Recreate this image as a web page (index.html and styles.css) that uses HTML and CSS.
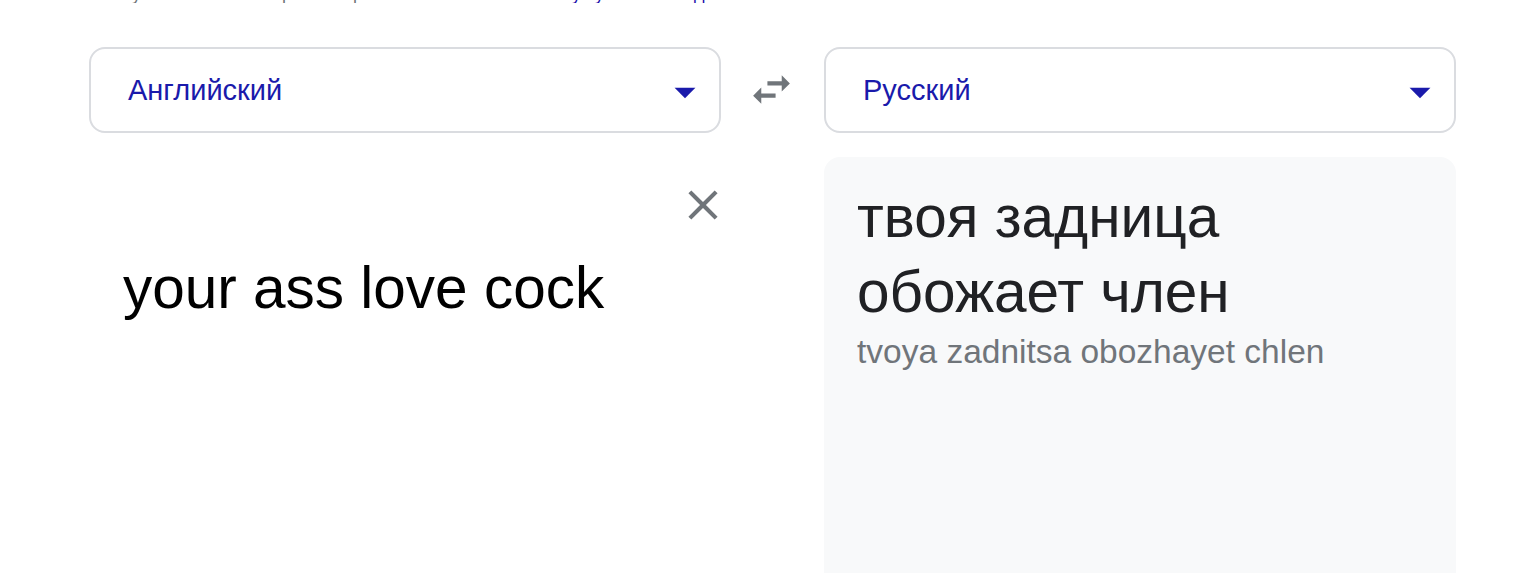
FILE: index.html
```html
<!DOCTYPE html>
<html lang="ru">
<head>
<meta charset="utf-8">
<title>Переводчик</title>
<link rel="stylesheet" href="styles.css">
</head>
<body>
<div class="topline"><span class="gray">у</span><span class="gray g2">р</span><span class="gray g3">р</span><span class="link l1">у</span><span class="link l2">у</span><span class="link l3">д</span></div>
<div class="widget">
  <div class="select">
    <span class="lang">Английский</span>
    <svg class="drop" viewBox="0 0 24 24"><path d="M7 10l5 5 5-5z"/></svg>
  </div>
  <div class="swap">
    <svg viewBox="0 0 24 24"><path d="M6.99 11L3 15l3.99 4v-3H14v-2H6.99v-3zM21 9l-3.99-4v3H10v2h7.01v3L21 9z"/></svg>
  </div>
  <div class="select">
    <span class="lang">Русский</span>
    <svg class="drop" viewBox="0 0 24 24"><path d="M7 10l5 5 5-5z"/></svg>
  </div>
  <div class="source">
    <div class="source-text">your ass love cock</div>
    <div class="clear">
      <svg viewBox="0 0 24 24"><path d="M19 6.41L17.59 5 12 10.59 6.41 5 5 6.41 10.59 12 5 17.59 6.41 19 12 13.41 17.59 19 19 17.59 13.41 12z"/></svg>
    </div>
  </div>
  <div></div>
  <div class="target">
    <div class="target-text">твоя задница обожает член</div>
    <div class="translit">tvoya zadnitsa obozhayet chlen</div>
  </div>
</div>
</body>
</html>
```
FILE: styles.css
```css
html, body {
  margin: 0;
  padding: 0;
  background: #fff;
  font-family: "Liberation Sans", Arial, sans-serif;
  overflow: hidden;
  height: 573px;
}
.topline {
  height: 3px;
  overflow: hidden;
  padding-left: 132px;
  font-size: 18px;
  line-height: 18px;
  white-space: nowrap;
  display: flex;
}
.topline span {
  display: block;
  margin-top: -15px;
}
.gray { color: #70757a; }
.link { color: #1a0dab; }
.g2 { margin-left: 141px; }
.g3 { margin-left: 61px; }
.l1 { margin-left: 209px; }
.l2 { margin-left: 14px; }
.l3 { margin-left: 90px; }
.widget {
  display: grid;
  grid-template-columns: 632px 103px 632px;
  grid-template-rows: 86px auto;
  row-gap: 24px;
  padding-left: 89px;
  margin-top: 44px;
}
.select {
  box-sizing: border-box;
  border: 2px solid #dadce0;
  border-radius: 16px;
  display: flex;
  align-items: center;
  padding-left: 37px;
  padding-right: 9px;
}
.lang {
  flex: 1;
  font-size: 29px;
  color: #1a1aab;
}
.drop {
  width: 50px;
  height: 50px;
  fill: #1a1aab;
  margin-top: 3px;
}
.swap {
  display: flex;
  align-items: center;
  justify-content: center;
}
.swap svg {
  width: 49px;
  height: 49px;
  fill: #70757a;
  margin-left: -2px;
  margin-top: -1px;
}
.source {
  display: flex;
  align-items: flex-start;
  height: 410px;
}
.source-text {
  flex: 1;
  padding-top: 93px;
  padding-left: 34px;
  font-size: 58.5px;
  line-height: 75px;
  color: #000;
}
.clear {
  width: 50px;
  height: 50px;
  margin-top: 23px;
  margin-right: -7px;
}
.clear svg {
  width: 50px;
  height: 50px;
  fill: #70757a;
}
.target {
  background: #f8f9fa;
  border-radius: 16px 16px 0 0;
  padding: 22px 40px 0 33px;
  height: 440px;
}
.target-text {
  font-size: 58.5px;
  line-height: 75px;
  color: #202124;
}
.translit {
  font-size: 33.5px;
  line-height: 46px;
  color: #70757a;
}
```
